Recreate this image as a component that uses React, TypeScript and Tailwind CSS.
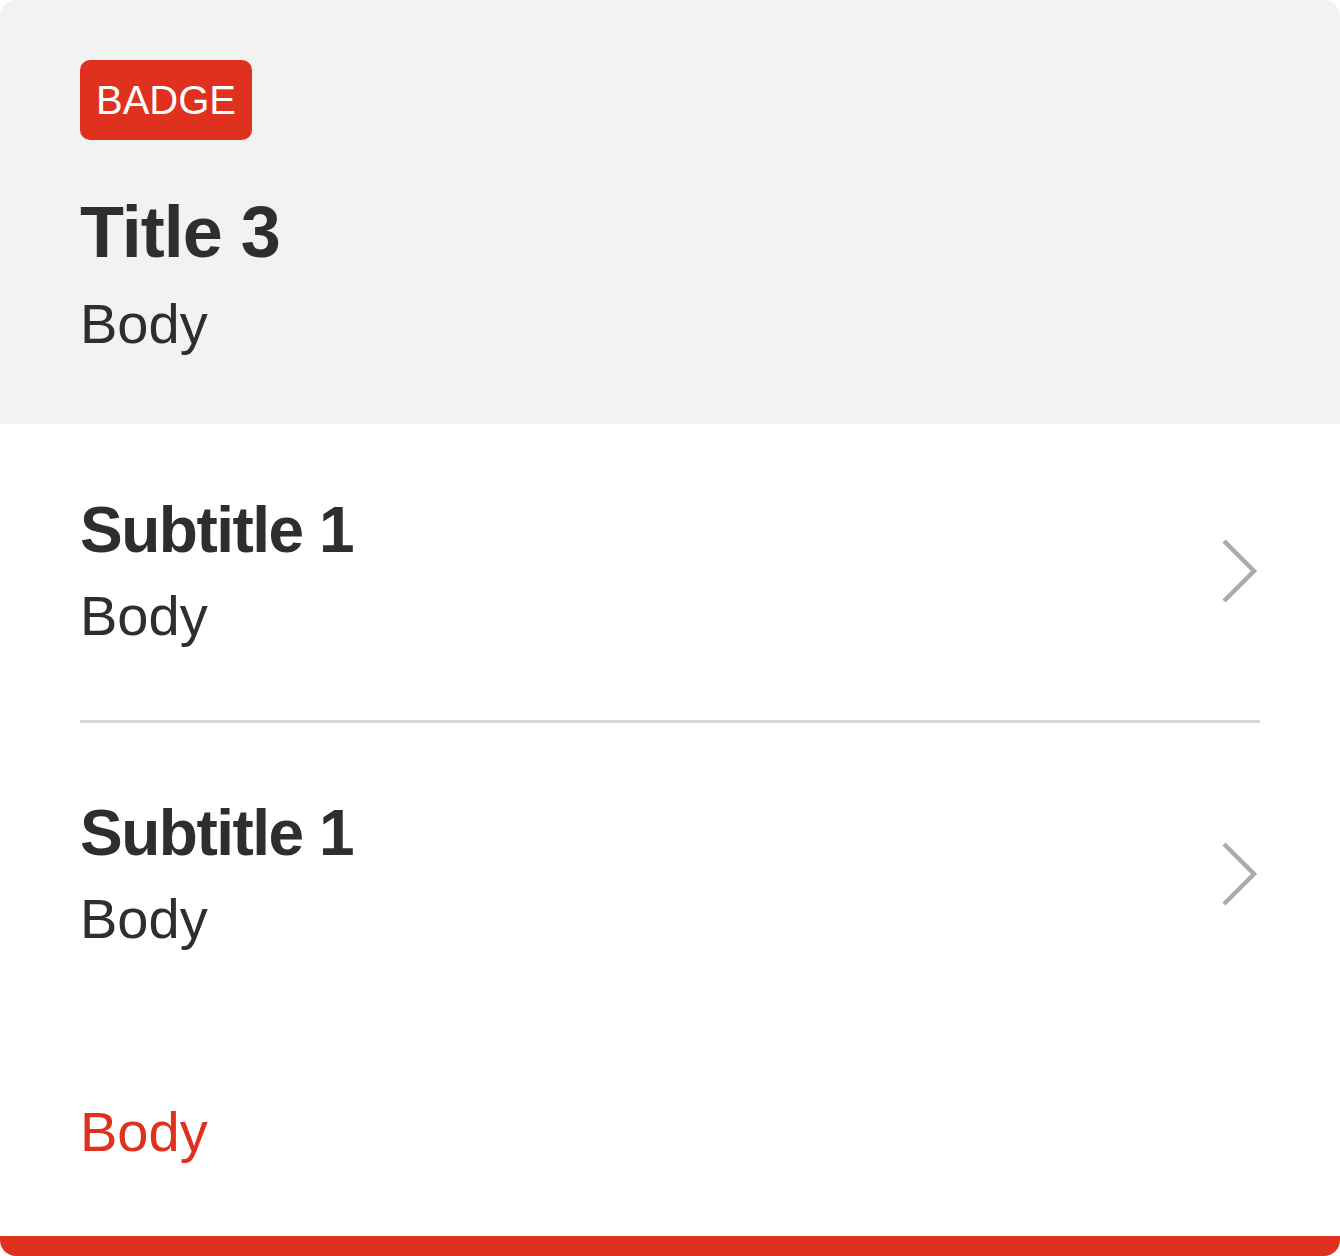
const FONT = "font-['Liberation_Sans',Arial,sans-serif]"

function Chevron() {
  return (
    <svg width="38" height="66" viewBox="0 0 38 66" fill="none" className="shrink-0">
      <polyline points="2,3 32,33 2,63" stroke="#ababab" strokeWidth="4.5" strokeLinejoin="miter" />
    </svg>
  )
}

function Row({ top, bottom }: { top: string; bottom: string }) {
  return (
    <div className={`flex items-center justify-between ${top} ${bottom}`}>
      <div className="flex flex-col gap-[26px]">
        <p className="text-[64px] leading-[64px] font-bold tracking-[-1.5px] text-[#2e2e2e]">Subtitle 1</p>
        <p className="text-[56px] leading-[56px] text-[#2e2e2e]">Body</p>
      </div>
      <Chevron />
    </div>
  )
}

export default function App() {
  return (
    <div className={`w-[1340px] h-[1256px] bg-white ${FONT}`}>
      <div className="flex flex-col h-full rounded-[16px] overflow-hidden bg-white">
        {/* Header */}
        <div className="bg-[#f2f2f2] h-[424px] px-20 pt-[60px]">
          <div className="inline-flex items-center h-20 px-4 rounded-[10px] bg-[#e0301e]">
            <span className="text-[40px] leading-[40px] text-white">BADGE</span>
          </div>
          <h3 className="mt-[56px] text-[72px] leading-[72px] font-bold tracking-[-1px] text-[#2e2e2e]">Title 3</h3>
          <p className="mt-[28px] text-[56px] leading-[56px] text-[#2e2e2e]">Body</p>
        </div>

        {/* List */}
        <div className="px-20 flex-1 flex flex-col">
          <Row top="pt-[74px]" bottom="pb-[76px]" />
          <div className="h-[3px] bg-[#d6d6d6]" />
          <Row top="pt-[78px]" bottom="pb-0" />
          <p className="mt-[157px] text-[56px] leading-[56px] text-[#e0301e]">Body</p>
        </div>

        <div className="h-5 bg-[#e0301e] shrink-0" />
      </div>
    </div>
  )
}
